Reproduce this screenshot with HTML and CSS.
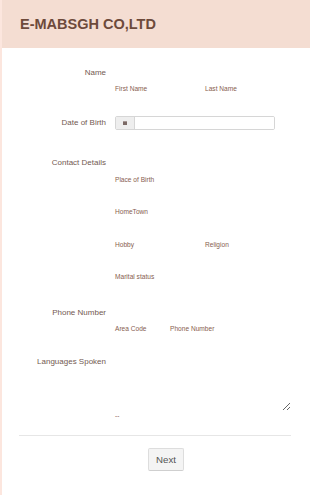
FILE: index.html
```html
<!doctype html><html lang="en"><head>
<meta charset="utf-8" />
<meta name="viewport" content="width=device-width" />
<title>E-MABSGH CO,LTD</title>
<link rel="stylesheet" href="styles.css"></head><body>
<div class="page">
	<div class="head">E-MABSGH CO,LTD</div>
	<form class="form" onsubmit="return false">
		<div class="row r-name">
			<label class="lbl">Name</label>
			<div class="field pair">
				<span class="sub w90">First Name</span>
				<span class="sub">Last Name</span>
			</div>
		</div>
		<div class="row r-dob">
			<label class="lbl">Date of Birth</label>
			<div class="field date">
				<span class="addon"><i class="cal"></i></span>
				<input type="text" />
			</div>
		</div>
		<div class="row r-contact">
			<label class="lbl">Contact Details</label>
			<div class="field">
				<div class="sub s1">Place of Birth</div>
				<div class="sub s2">HomeTown</div>
				<div class="pair s3"><span class="sub w90">Hobby</span><span class="sub">Religion</span></div>
				<div class="sub s2">Marital status</div>
			</div>
		</div>
		<div class="row r-phone">
			<label class="lbl">Phone Number</label>
			<div class="field pair">
				<span class="sub w55">Area Code</span>
				<span class="sub">Phone Number</span>
			</div>
		</div>
		<div class="row r-lang">
			<label class="lbl">Languages Spoken</label>
			<div class="field">
				<textarea></textarea>
				<div class="sub count">--</div>
			</div>
		</div>
		<hr class="line" />
		<div class="btns"><button class="next">Next</button></div>
	</form>
</div>
</body></html>
```
FILE: styles.css
```css
html, body{ margin: 0; padding: 0; background: #fff }
body{ font-family: "Liberation Sans", Arial, sans-serif; color: #735a51 }
.page{ border-left: 2px solid #fce6de; min-height: 495px; box-sizing: border-box }
.head{ background: #f4ddd2; height: 48px; line-height: 48px; padding-left: 18px; font-size: 14.5px; font-weight: bold; color: #6d4a3b }
.form{ padding: 0 19px 0 17px }
.row{ display: flex }
.lbl{ width: 87px; margin-right: 9px; text-align: right; font-size: 8px; line-height: 10px; flex: none }
.field{ flex: 1; min-width: 0 }
.pair{ display: flex }
.sub{ font-size: 6.6px; line-height: 10px; color: #87604f; display: block }
.w90{ width: 90px }
.w55{ width: 55px }

.r-name{ margin-top: 20px }
.r-name .field{ padding-top: 16px }

.r-dob{ margin-top: 22px; align-items: center }
.date{ display: flex; height: 14px; max-width: 160px; border: 1px solid #d6d6d6; border-radius: 2px; box-sizing: border-box; overflow: hidden }
.date .addon{ width: 18px; background: #eee; border-right: 1px solid #d6d6d6; display: flex; align-items: center; justify-content: center }
.cal{ width: 4px; height: 3px; background: #7b6a66; border-top: 1px solid #a49693; display: block }
.date input{ flex: 1; border: none; outline: none; padding: 0; min-width: 0; background: #fff }

.r-contact{ margin-top: 28px }
.r-contact .field .s1{ margin-top: 17px }
.r-contact .field .s2{ margin-top: 22px }
.r-contact .field .s3{ margin-top: 23px }

.r-phone{ margin-top: 26px }
.r-phone .field{ padding-top: 16px }

.r-lang{ margin-top: 23px }
.r-lang textarea{ display: block; width: 176px; height: 54px; border: none; outline: none; padding: 0; margin: 0; resize: vertical; background: #fff }
.count{ font-size: 6.5px; color: #8a5b4c }

.line{ border: none; border-top: 1px solid #e6e6e6; margin: 14px 0 0 0; height: 0 }
.btns{ padding-top: 12px; padding-left: 129px }
.next{ width: 36px; height: 23px; padding: 0; font: 9.7px "Liberation Sans", Arial, sans-serif; color: #555; background: #f4f4f4; border: 1px solid #ddd; border-bottom-color: #cfcfcf; border-radius: 2px }
```
